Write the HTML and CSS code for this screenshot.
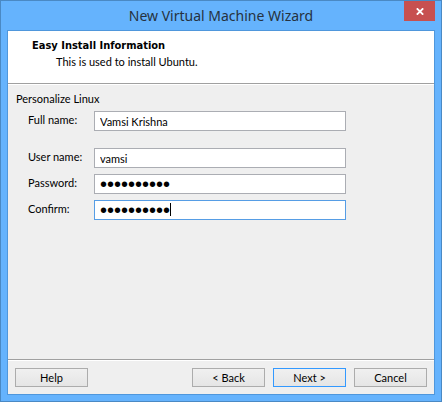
FILE: index.html
```html
<!DOCTYPE html>
<html lang="en">
<head>
    <meta charset="UTF-8">
    <meta name="viewport" content="width=device-width, initial-scale=1.0">
    <title>New Virtual Machine Wizard</title>
    <link rel="stylesheet" href="styles.css">
</head>
<body>

<div class="window">
    <div class="titlebar">
        <h1>New Virtual Machine Wizard</h1>
        <button type="button" class="close" aria-label="Close">
            <svg width="8" height="7" viewBox="0 0 8 7">
                <path d="M0.8 0.3 L7.2 6.7 M7.2 0.3 L0.8 6.7" stroke="#fff" stroke-width="1.8"/>
            </svg>
        </button>
    </div>

    <form class="client">
        <div class="header">
            <h2>Easy Install Information</h2>
            <p>This is used to install Ubuntu.</p>
        </div>

        <fieldset class="content">
            <legend>Personalize Linux</legend>
            <div class="row full-name">
                <label for="fullName">Full name:</label>
                <input type="text" id="fullName" value="Vamsi Krishna">
            </div>
            <div class="row">
                <label for="userName">User name:</label>
                <input type="text" id="userName" value="vamsi">
            </div>
            <div class="row">
                <label for="password">Password:</label>
                <input type="password" id="password" value="vamsi12345">
            </div>
            <div class="row">
                <label for="confirm">Confirm:</label>
                <div class="field">
                    <input type="password" id="confirm" class="active" value="vamsi12345">
                    <span class="caret"></span>
                </div>
            </div>
        </fieldset>

        <div class="footer">
            <button type="button" class="help">Help</button>
            <button type="button">&lt; Back</button>
            <button type="submit" class="default">Next &gt;</button>
            <button type="button">Cancel</button>
        </div>
    </form>
</div>

</body>
</html>
```
FILE: styles.css
```css
* {
    margin: 0;
    padding: 0;
    box-sizing: border-box;
}
body {
    font-family: Lato, Tahoma, sans-serif;
    font-size: 11px;
    line-height: 14px;
    color: #000;
}
.window {
    display: flex;
    flex-direction: column;
    min-height: 100vh;
    padding: 0 6px 6px;
    background-color: #65b3fd;
    border: 1px solid #4a89c4;
}
.titlebar {
    position: relative;
    height: 29px;
}
.titlebar h1 {
    font-family: "Noto Sans", "Segoe UI", sans-serif;
    font-size: 14px;
    font-weight: normal;
    line-height: 30px;
    text-align: center;
    color: #26323f;
}
.close {
    position: absolute;
    top: 0;
    right: 0;
    display: flex;
    justify-content: center;
    align-items: center;
    width: 31px;
    height: 20px;
    background-color: #c75050;
    border: none;
}

.client {
    flex: 1;
    display: flex;
    flex-direction: column;
    background-color: #efefef;
    border: 1px solid #4f97dc;
}

.header {
    height: 53px;
    padding: 7px 24px 0;
    background-color: #fff;
    border-bottom: 1px solid #a0a0a0;
    box-shadow: 0 1px 0 #fff;
}

.header h2 {
    font-family: "DejaVu Sans Condensed", Tahoma, sans-serif;
    font-size: 11px;
    line-height: 16px;
}

.header p {
    padding-left: 24px;
    line-height: 16px;
}

.content {
    flex: 1;
    min-width: 0;
    padding: 0 88px 0 20px;
    margin-top: 8px;
    border: none;
}

.content legend {
    margin-left: -12px;
}

.row {
    display: flex;
    margin-bottom: 6px;
}

.row.full-name {
    margin: 5px 0 17px;
}

.row label {
    width: 66px;
    line-height: 18px;
}

.row input {
    flex: 1;
    min-width: 0;
    height: 20px;
    padding: 0 5px;
    font: inherit;
    color: #000;
    background-color: #fff;
    border: 1px solid #abadb3;
    outline: none;
}

.row input[type="password"] {
    font-family: "Liberation Sans", Arial, sans-serif;
    font-size: 20px;
    line-height: 18px;
}

.row input.active, .row input:focus {
    border-color: #569de5;
}

.field {
    position: relative;
    flex: 1;
    min-width: 0;
    display: flex;
}

.caret {
    position: absolute;
    top: 3px;
    left: 76px;
    width: 1px;
    height: 13px;
    background-color: #000;
}

.footer {
    display: flex;
    gap: 8px;
    padding: 8px 7px 7px;
    border-top: 1px solid #a0a0a0;
    box-shadow: inset 0 1px 0 #fff;
}

.footer button {
    width: 73px;
    height: 19px;
    font: inherit;
    color: #000;
    background: linear-gradient(#f0f0f0, #e5e5e5);
    border: 1px solid #acacac;
}

.footer .help {
    margin-right: auto;
}

.footer .default {
    border-color: #3399ff;
}
```
